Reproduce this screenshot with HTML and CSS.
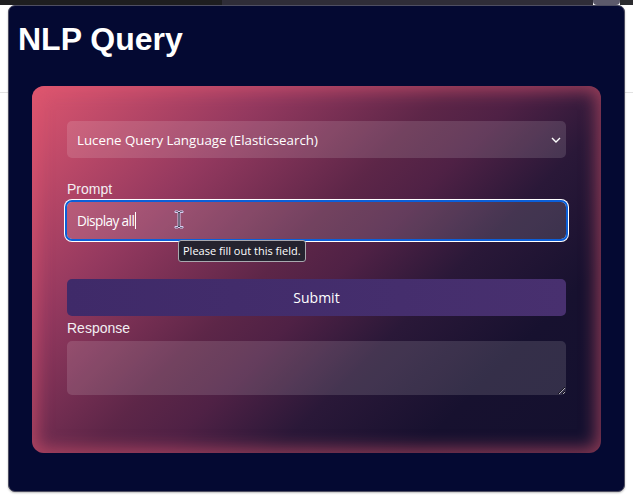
FILE: index.html
```html
<!DOCTYPE html>
<html lang="en">
<head>
<meta charset="utf-8">
<title>NLP Query</title>
<link rel="stylesheet" href="styles.css">
</head>
<body>
  <div class="tabstrip">
    <div class="tab-dark"></div>
    <div class="tab-mid"></div>
    <div class="tab-chip"></div>
    <div class="tab-end"></div>
  </div>
  <div class="window">
    <h1 class="title">NLP Query</h1>
    <form class="card">
      <div class="select-wrap">
        <select class="select">
          <option>Lucene Query Language (Elasticsearch)</option>
        </select>
        <svg class="chevron" width="10" height="6" viewBox="0 0 10 6"><path d="M1 1 L5 5 L9 1" fill="none" stroke="#fff" stroke-width="1.4"/></svg>
      </div>
      <label class="label label-prompt">Prompt</label>
      <div class="field-wrap">
        <div class="field focused"><span class="field-text">Display all</span><span class="caret"></span></div>
        <svg class="ibeam" width="10" height="19" viewBox="0 0 10 19">
          <path d="M1 1 H4 L5 2 L6 1 H9 V2.5 H6 V16.5 H9 V18 H6 L5 17 L4 18 H1 V16.5 H4 V2.5 H1 Z" fill="#0c0c14" stroke="#d4cdf0" stroke-width="1"/>
        </svg>
        <div class="tooltip">Please fill out this field.</div>
      </div>
      <button type="button" class="submit">Submit</button>
      <label class="label label-response">Response</label>
      <textarea class="response"></textarea>
    </form>
  </div>
</body>
</html>
```

FILE: styles.css
```css
* { box-sizing: border-box; }

html, body { height: 100%; }

body {
  margin: 0;
  background-color: #ffffff;
  background-image: linear-gradient(to bottom, transparent 92px, #e2e2e2 92px, #e2e2e2 93px, transparent 93px);
  font-family: "Liberation Sans", Arial, sans-serif;
  overflow: hidden;
}

.tabstrip {
  display: flex;
  height: 5px;
}
.tab-dark { width: 222px; background: #1e1e20; }
.tab-mid { flex: 1; background: #2f2d38; }
.tab-chip { width: 27px; background: #5c5a6b; border-radius: 0 0 4px 4px; }
.tab-end { width: 13px; background: #2b2b2f; }

.window {
  margin: 0 8px;
  width: 617px;
  height: 487px;
  background: #040932;
  border: 1px solid #4e4e62;
  border-radius: 7px;
  padding: 15px 9px 0 9px;
  box-shadow: 0 1px 2px rgba(0,0,0,0.25);
}

.title {
  margin: 0;
  font-family: "Liberation Sans", Arial, sans-serif;
  font-size: 32px;
  font-weight: bold;
  line-height: 37px;
  color: #ffffff;
}

.card {
  margin: 28px 14px 0 14px;
  height: 367px;
  border-radius: 12px;
  padding: 35px 35px 0 35px;
  background: linear-gradient(135deg, #dc556e 0%, #c94e6b 7%, #94395f 26%, #5d2648 45%, #4f2145 53%, #2a1838 65%, #17112f 80%, #13102f 100%);
  box-shadow: inset 0 0 16px 5px rgba(226, 88, 111, 0.55);
  display: flex;
  flex-direction: column;
}

.select-wrap {
  position: relative;
  height: 37px;
}

.select {
  -webkit-appearance: none;
  appearance: none;
  width: 100%;
  height: 37px;
  border: none;
  border-radius: 5px;
  background: rgba(255, 255, 255, 0.13);
  color: #ffffff;
  font-family: "Open Sans", sans-serif;
  font-size: 13.3px;
  padding: 0 10px;
  outline: none;
}

.chevron {
  position: absolute;
  right: 5px;
  top: 16px;
}

.label {
  display: block;
  font-family: "Liberation Sans", Arial, sans-serif;
  font-size: 14px;
  line-height: 17px;
  color: #f2eef2;
  margin-bottom: 4px;
}
.label-prompt { margin-top: 23px; }
.label-response { margin-top: 4px; }

.field-wrap {
  position: relative;
  height: 37px;
}

.field {
  height: 37px;
  border-radius: 5px;
  background: rgba(255, 255, 255, 0.13);
  color: #ffffff;
  font-family: "Open Sans", sans-serif;
  font-size: 13.6px;
  letter-spacing: -0.6px;
  padding: 0 10px;
  display: flex;
  align-items: center;
}
.field.focused {
  outline: 2px solid #0b5fd9;
  box-shadow: 0 0 0 3px #ffffff;
}

.caret {
  display: inline-block;
  width: 1px;
  height: 17px;
  margin-left: 1px;
  background: #ffffff;
}

.ibeam {
  position: absolute;
  left: 107px;
  top: 8px;
}

.tooltip {
  position: absolute;
  left: 111px;
  top: 38px;
  width: 128px;
  height: 22px;
  background: #25232f;
  border: 1px solid #a9a9b0;
  border-radius: 3px;
  color: #ffffff;
  font-family: "Open Sans", sans-serif;
  font-size: 11px;
  line-height: 20px;
  padding: 0 4px;
  white-space: nowrap;
}

.submit {
  margin-top: 40px;
  height: 37px;
  border: none;
  border-radius: 5px;
  background: linear-gradient(90deg, #3f2a69, #48306f);
  color: #ffffff;
  font-family: "Open Sans", sans-serif;
  font-size: 14px;
}

.response {
  display: block;
  width: 100%;
  height: 54px;
  border: none;
  border-radius: 5px;
  background: rgba(255, 255, 255, 0.13);
  color: #ffffff;
  font-family: "Open Sans", sans-serif;
  font-size: 14px;
  padding: 8px 10px;
  color-scheme: dark;
}
```
